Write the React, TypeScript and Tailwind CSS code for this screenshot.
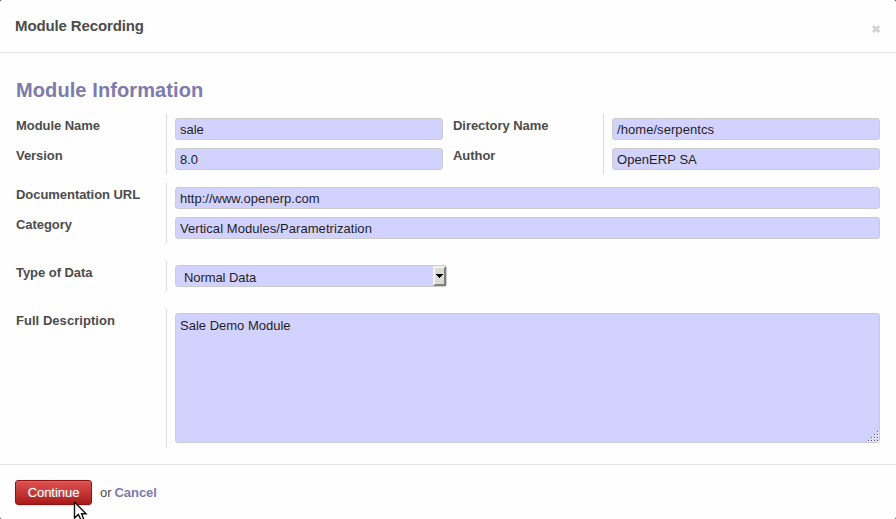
import React from "react";

const inputClass =
  "block h-[22px] w-full rounded-[3px] border border-[#ccc] bg-[#d2d2ff] px-1 pt-px text-[13px] leading-[20px] text-[#1f1f1f] outline-none";

function Field({ label, children }: { label: string; children: React.ReactNode }) {
  return (
    <div className="flex h-[30px] w-full">
      <label className="w-[150px] shrink-0 pt-[3px] text-[13px] leading-[18px] font-bold tracking-[-0.05px] whitespace-nowrap">
        {label}
      </label>
      <div className="min-w-0 flex-1 border-l border-[#ddd] py-1 pl-2">{children}</div>
    </div>
  );
}

function TextField({ label, value, spacing = "" }: { label: string; value: string; spacing?: string }) {
  return (
    <Field label={label}>
      <input className={`${inputClass} ${spacing}`} defaultValue={value} />
    </Field>
  );
}

function ResizeGrip() {
  const dots = [
    [9, 0], [6, 3], [9, 3], [3, 6], [6, 6], [9, 6], [0, 9], [3, 9], [6, 9], [9, 9],
  ];
  return (
    <svg className="absolute right-[1px] bottom-[1px]" width="11" height="11" shapeRendering="crispEdges">
      {dots.map(([x, y]) => (
        <g key={`${x}-${y}`}>
          <rect x={x} y={y} width="2" height="2" fill="#f0f0ff" />
          <rect x={x} y={y} width="1" height="1" fill="#55556f" />
        </g>
      ))}
    </svg>
  );
}

export default function App() {
  return (
    <div className="relative flex h-[519px] w-[896px] flex-col overflow-hidden bg-[#2b2b2b] font-['Liberation_Sans',Arial,sans-serif] text-[13px] text-[#4c4c4c]">
      <div className="flex h-full flex-col rounded-[2px] bg-[#fefefe]">
        <header className="flex h-[53px] shrink-0 items-center justify-between border-b border-[#e2e2e2] pr-[15px] pl-[15px]">
          <h2 className="text-[15px] leading-[20px] font-bold tracking-[-0.12px]">Module Recording</h2>
          <svg className="mt-[6px]" width="10" height="10" viewBox="0 0 10 10">
            <path d="M2 2 L8.4 8 M8.4 2 L2 8" stroke="#d2d2d2" strokeWidth="2.7" />
          </svg>
        </header>

        <main className="h-[411px] shrink-0 px-4 pt-[25px]">
          <h1 className="h-[36px] text-[20px] leading-[24px] font-bold tracking-[0.1px] text-[#7c7bad]">
            Module Information
          </h1>

          <div className="flex gap-[10px]">
            <div className="w-[427px]">
              <TextField label="Module Name" value="sale" />
              <TextField label="Version" value="8.0" />
            </div>
            <div className="w-[427px]">
              <TextField label="Directory Name" value="/home/serpentcs" spacing="tracking-[0.06px]" />
              <TextField label="Author" value="OpenERP SA" spacing="tracking-[0.06px]" />
            </div>
          </div>

          <div className="mt-[9px]">
            <TextField label="Documentation URL" value="http://www.openerp.com" />
            <TextField label="Category" value="Vertical Modules/Parametrization" spacing="tracking-[0.06px]" />
          </div>

          <div className="mt-[18px]">
            <Field label="Type of Data">
              <div className="flex h-[22px] w-[272px] justify-between rounded-[3px] border border-[#ccc] bg-[#d2d2ff] pl-2 text-[#1f1f1f]">
                <span className="pt-[2px] leading-[20px] tracking-[-0.08px]">Normal Data</span>
                <span className="flex h-[20px] w-[13px] items-center justify-center border-2 border-t-[#f2f2f2] border-r-[#808080] border-b-[#808080] border-l-[#f2f2f2] bg-[#dcdad5]">
                  <svg width="7" height="4" viewBox="0 0 7 4" shapeRendering="crispEdges">
                    <path d="M0 0H7V1H6V2H5V3H4V4H3V3H2V2H1V1H0Z" fill="#000" />
                  </svg>
                </span>
              </div>
            </Field>
          </div>

          <div className="mt-[18px] flex h-[139px]">
            <label className="w-[150px] shrink-0 pt-[3px] leading-[18px] font-bold tracking-[0.04px]">
              Full Description
            </label>
            <div className="flex-1 border-l border-[#ddd] pt-1 pl-2">
              <div className="relative h-[130px]">
                <textarea
                  className="block h-[130px] w-full resize-none rounded-[3px] border border-[#ccc] bg-[#d2d2ff] px-1 pt-[3px] text-[13px] leading-[18px] text-[#1f1f1f] outline-none"
                  defaultValue="Sale Demo Module"
                />
                <ResizeGrip />
              </div>
            </div>
          </div>
        </main>

        <footer className="flex flex-1 items-start border-t border-[#e2e2e2] pt-[15px] pl-[15px]">
          <button className="h-[25px] w-[77px] rounded-[3px] border border-[#901010] bg-linear-to-b from-[#df5050] to-[#a91818] text-[13px] leading-[22px] tracking-[-0.05px] text-white shadow-[0_1px_2px_rgba(0,0,0,0.1),inset_0_1px_1px_rgba(155,155,155,0.4)] [text-shadow:0_0_2px_rgba(255,255,255,0.5),0_1px_1px_rgba(0,0,0,0.3)]">
            Continue
          </button>
          <span className="ml-2 leading-[25px]">or</span>
          <a className="ml-[3px] leading-[25px] font-bold tracking-[-0.08px] text-[#7c7bad]">Cancel</a>
        </footer>
      </div>

      <svg className="absolute top-[501px] left-[73px]" width="15" height="18" viewBox="0 0 15 18">
        <path d="M1.5 1V17L5.4 13.4L8 19H11L8.6 12.8H13Z" fill="#fff" stroke="#111" strokeWidth="1.4" />
      </svg>
    </div>
  );
}
